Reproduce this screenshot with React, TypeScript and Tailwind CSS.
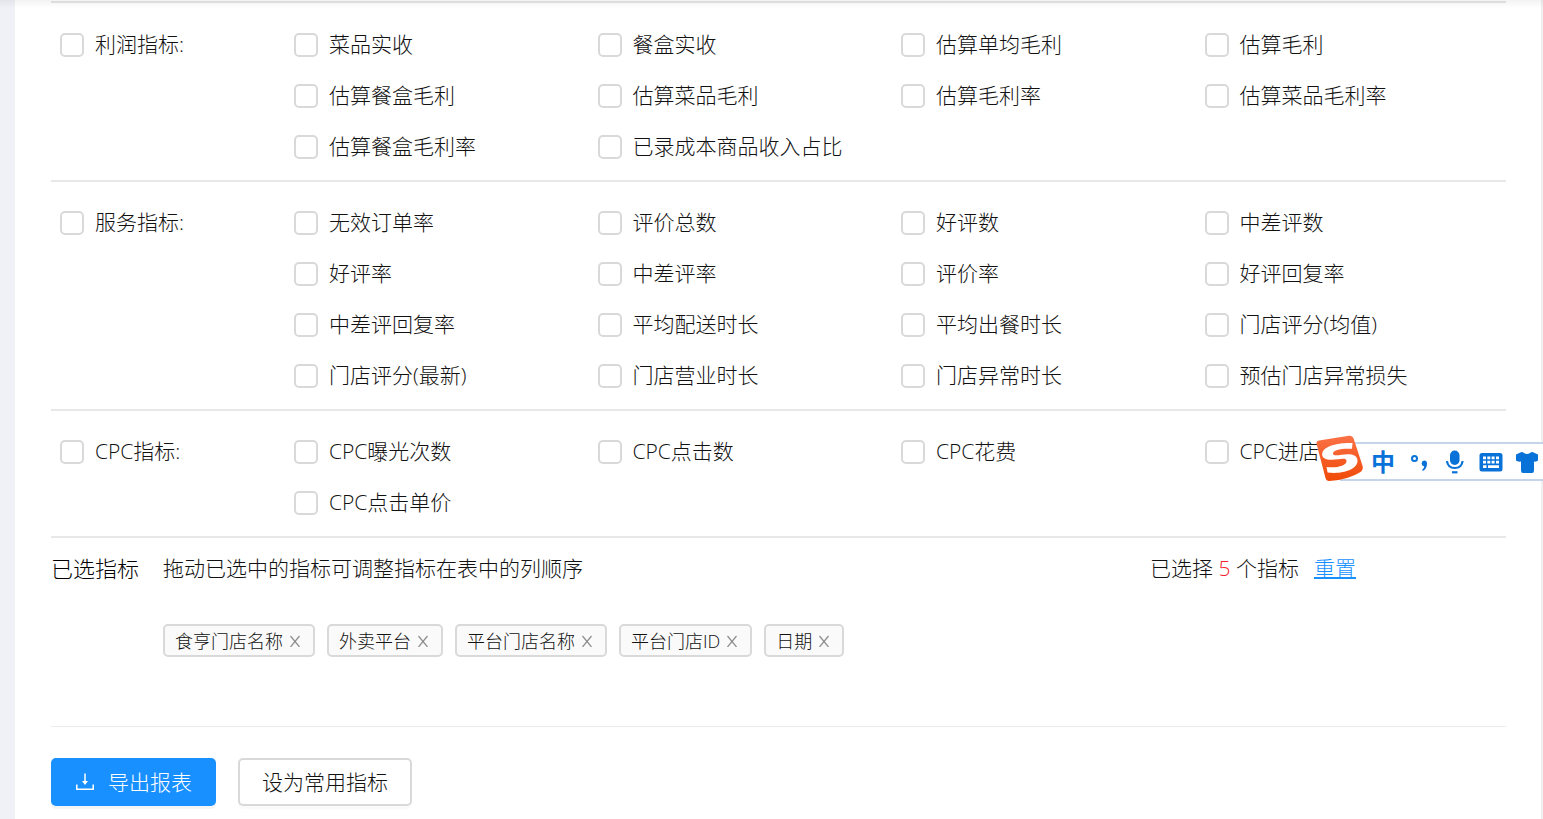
import React from "react";

interface MetricGroup {
  title: string;
  metrics: string[];
}

const metricGroups: MetricGroup[] = [
  {
    title: "利润指标",
    metrics: [
      "菜品实收",
      "餐盒实收",
      "估算单均毛利",
      "估算毛利",
      "估算餐盒毛利",
      "估算菜品毛利",
      "估算毛利率",
      "估算菜品毛利率",
      "估算餐盒毛利率",
      "已录成本商品收入占比",
    ],
  },
  {
    title: "服务指标",
    metrics: [
      "无效订单率",
      "评价总数",
      "好评数",
      "中差评数",
      "好评率",
      "中差评率",
      "评价率",
      "好评回复率",
      "中差评回复率",
      "平均配送时长",
      "平均出餐时长",
      "门店评分(均值)",
      "门店评分(最新)",
      "门店营业时长",
      "门店异常时长",
      "预估门店异常损失",
    ],
  },
  {
    title: "CPC指标",
    metrics: ["CPC曝光次数", "CPC点击数", "CPC花费", "CPC进店", "CPC点击单价"],
  },
];

const initialSelected = ["食亨门店名称", "外卖平台", "平台门店名称", "平台门店ID", "日期"];

const CheckItem: React.FC<{ label: string }> = ({ label }) => (
  <label className="flex h-[51px] cursor-pointer items-center gap-[11px] pl-[9px] whitespace-nowrap">
    <input
      type="checkbox"
      className="size-6 shrink-0 appearance-none rounded-[5px] border-2 border-[#d9d9d9] bg-white checked:border-[#1890ff] checked:bg-[#1890ff]"
    />
    <span className="pb-[2px]">{label}</span>
  </label>
);

const MetricSection: React.FC<{ group: MetricGroup }> = ({ group }) => (
  <section className="flex items-start border-b-2 border-[#e8e8e8] pt-[15px] pr-[7px] pb-2">
    <div className="w-[234px] shrink-0">
      <CheckItem label={`${group.title}:`} />
    </div>
    <div className="grid flex-1 grid-cols-4">
      {group.metrics.map((metric) => (
        <CheckItem key={metric} label={metric} />
      ))}
    </div>
  </section>
);

const InputMethodBar: React.FC = () => (
  <div className="absolute top-[435px] right-0 flex h-12 items-start">
    {/* Logo */}
    <svg className="z-10 -mr-6 size-12" viewBox="0 0 48 48">
      <defs>
        <linearGradient id="logoFill" x1="0" y1="0" x2="0" y2="1">
          <stop offset="0" stopColor="#fa7146" />
          <stop offset="1" stopColor="#f04a08" />
        </linearGradient>
      </defs>
      <path
        d="M3 5.5 33 .8Q36.500 .3 37.600 3.500L46.600 31Q47.600 34.500 44.500 37Q33 44.500 13.500 46Q10.300 46.200 9.500 43L.6 9Q0 6 3 5.500Z"
        fill="url(#logoFill)"
      />
      <path
        d="M36.500 8C24 7.200 7.500 10.500 6.200 18.300C5.200 25 13.500 25.500 22 24.300C27.500 23.500 30.500 23.500 30.500 26C30.500 30.800 20.500 33.300 10.500 32L11.600 37.500C25 39.500 41.500 35 41.500 25.800C41.500 19.300 34 18.500 25.500 19.800C20 20.700 17 20.500 17 18.500C17 15 25 13.200 36 13.800Z"
        fill="#fff"
      />
    </svg>
    <div className="mt-[7px] flex h-[39px] items-center gap-3 border-y-2 border-[#c6d4e9] bg-white pr-1 pl-[31px] text-[#0872d9]">
      <button type="button" aria-label="切换中英文" className="flex size-6 items-center justify-center text-[24px] leading-6 font-bold">
        中
      </button>
      <button type="button" aria-label="标点">
        <svg className="size-6" viewBox="0 0 24 24">
          <circle cx="7.500" cy="8.500" r="2.500" fill="none" stroke="currentColor" strokeWidth="2" />
          <path d="M17 10.500a3 3 0 0 1 3 3c0 3.500-1.500 6-4 7.500l-1-1.200c1.300-1 2-2 2.200-3.400A3 3 0 0 1 17 10.500Z" fill="currentColor" />
        </svg>
      </button>
      <button type="button" aria-label="语音">
        <svg className="size-6" viewBox="0 0 24 24" fill="none" stroke="currentColor">
          <rect x="7" y="0.500" width="9.500" height="14.500" rx="4.700" fill="currentColor" stroke="none" />
          <path d="M4 11c.5 4.500 3.500 7 7.800 7s7.300-2.500 7.800-7" strokeWidth="2.200" />
          <path d="M9 22.300h5.500" strokeWidth="2.200" />
        </svg>
      </button>
      <button type="button" aria-label="键盘">
        <svg className="size-6" viewBox="0 0 24 24">
          <rect x="0.500" y="3" width="23" height="18.500" rx="2.500" fill="currentColor" />
          <path
            d="M4 6.500h3v2.800h-3zM8.300 6.500h3v2.800h-3zM12.600 6.500h3v2.800h-3zM17 6.500h3v2.800h-3zM4 10.800h3v2.800h-3zM8.300 10.800h3v2.800h-3zM12.600 10.800h3v2.800h-3zM17 10.800h3v2.800h-3zM4 15.200h3.500v2.800h-3.500zM9 15.200h11v2.800h-11z"
            fill="#fff"
          />
        </svg>
      </button>
      <button type="button" aria-label="皮肤">
        <svg className="size-6" viewBox="0 0 24 24">
          <path
            d="M6.500 2Q8 2 9 3Q12 5.200 15 3Q16 2 17.500 2L23 4.500V10.500Q21.500 12 19 11.500V20.500Q19 23 17 23H8Q6 23 6 20.500V11.500Q2.500 12 1 10.500V4.500Z"
            fill="currentColor"
          />
        </svg>
      </button>
    </div>
  </div>
);

const App: React.FC = () => {
  const [selected, setSelected] = React.useState(initialSelected);

  const removeMetric = (name: string) => {
    setSelected(selected.filter((item) => item !== name));
  };

  return (
    <div className="relative min-h-screen overflow-hidden bg-[#f0f1f6] pl-[15px] font-['Open_Sans','Noto_Sans_CJK_SC',sans-serif] text-[21px] leading-8 font-light text-[#111111]">
      <main className="min-h-screen border-r-2 border-[#efefef] bg-white pt-px pr-[35px] pb-[13px] pl-9">
        <div className="border-t-2 border-[#e4e6e5] pt-px">
          {metricGroups.map((group) => (
            <MetricSection key={group.title} group={group} />
          ))}
        </div>

        {/* Selected metrics */}
        <section className="border-b border-[#ececec] pt-[14px] pb-[69px]">
          <div className="flex items-center pr-[150px]">
            <h3 className="w-28 shrink-0 text-[22px] text-black">已选指标</h3>
            <p>拖动已选中的指标可调整指标在表中的列顺序</p>
            <p className="ml-auto">
              已选择 <span className="text-[#f5222d]">{selected.length}</span> 个指标
            </p>
            <a href="#reset" className="ml-[15px] text-[#1890ff] underline underline-offset-1" onClick={() => setSelected(initialSelected)}>
              重置
            </a>
          </div>
          <ul className="mt-10 flex flex-wrap gap-3 pl-28">
            {selected.map((name) => (
              <li
                key={name}
                draggable
                className="flex h-[33px] items-center gap-[6px] rounded-[5px] border-2 border-[#d9d9d9] bg-[#fafafa] pr-3 pl-[10px] text-[18px] leading-7"
              >
                {name}
                <button type="button" aria-label={`移除${name}`} onClick={() => removeMetric(name)}>
                  <svg className="size-3" viewBox="0 0 12 12" fill="none" stroke="#8c8c8c" strokeWidth="1.200">
                    <path d="M1.500 1 10.500 12M10.500 1 1.500 12" />
                  </svg>
                </button>
              </li>
            ))}
          </ul>
        </section>

        {/* Actions */}
        <div className="mt-[31px] flex gap-[22px]">
          <button
            type="button"
            className="flex h-12 items-center gap-[13px] rounded-[5px] bg-[#1890ff] px-6 text-white shadow-[0_3px_0_rgba(0,0,0,0.04)]"
          >
            <svg className="size-5" viewBox="0 0 20 20" fill="none" stroke="currentColor" strokeWidth="1.500">
              <path d="M1.800 12.500V17.200H18.200V12.500M10 1.500V10" />
              <path d="M7 9H13L10 13Z" fill="currentColor" stroke="none" />
            </svg>
            导出报表
          </button>
          <button
            type="button"
            className="h-12 rounded-[5px] border-2 border-[#d9d9d9] bg-white px-[22px] shadow-[0_3px_0_rgba(0,0,0,0.02)]"
          >
            设为常用指标
          </button>
        </div>
      </main>

      <div className="pointer-events-none absolute inset-x-0 top-0 h-2 bg-gradient-to-b from-black/5 to-transparent" />
      <InputMethodBar />
    </div>
  );
};

export default App;
